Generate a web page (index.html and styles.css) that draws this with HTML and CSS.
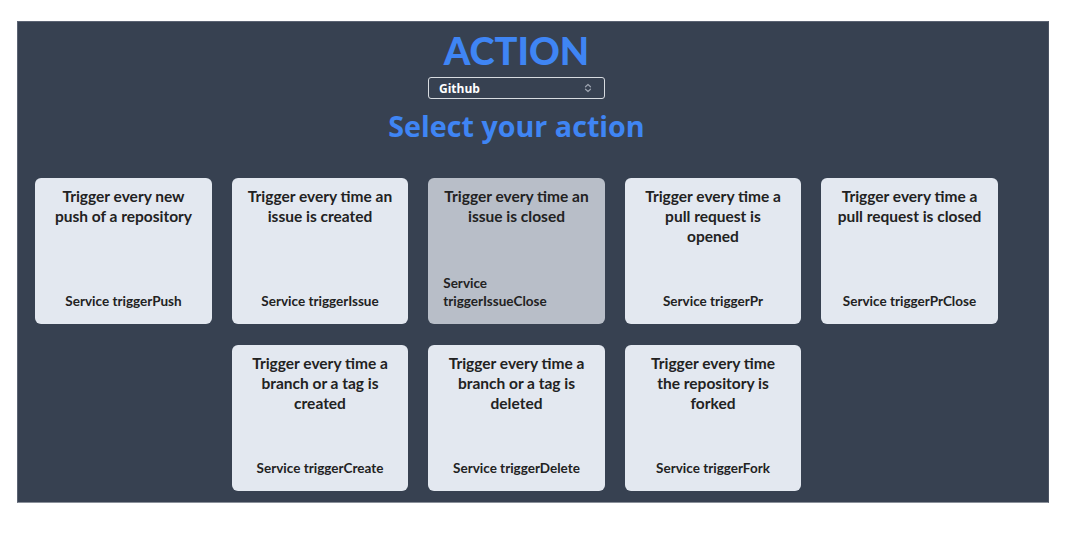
FILE: index.html
```html
<!DOCTYPE html>
<html lang="en">
<head>
<meta charset="utf-8">
<title>Action</title>
<link rel="stylesheet" href="styles.css">
</head>
<body>
<main class="panel">
  <div class="inner">
    <h1 class="title">ACTION</h1>
    <div class="select">
      <span class="select-value">Github</span>
      <svg class="chev" width="8" height="10" viewBox="0 0 8 10" fill="none" stroke="#9ca3af" stroke-width="1.2" stroke-linecap="round" stroke-linejoin="round"><path d="M1.5 3.8 4 1.5 6.5 3.8"/><path d="M1.5 6.2 4 8.5 6.5 6.2"/></svg>
    </div>
    <h2 class="subtitle">Select your action</h2>
    <div class="cards">
      <div class="card"><p class="card-title">Trigger every new push of a repository</p><p class="card-service">Service triggerPush</p></div>
      <div class="card"><p class="card-title">Trigger every time an issue is created</p><p class="card-service">Service triggerIssue</p></div>
      <div class="card card-active"><p class="card-title">Trigger every time an issue is closed</p><p class="card-service">Service triggerIssueClose</p></div>
      <div class="card"><p class="card-title">Trigger every time a pull request is opened</p><p class="card-service">Service triggerPr</p></div>
      <div class="card"><p class="card-title">Trigger every time a pull request is closed</p><p class="card-service">Service triggerPrClose</p></div>
      <div class="card"><p class="card-title">Trigger every time a branch or a tag is created</p><p class="card-service">Service triggerCreate</p></div>
      <div class="card"><p class="card-title">Trigger every time a branch or a tag is deleted</p><p class="card-service">Service triggerDelete</p></div>
      <div class="card"><p class="card-title">Trigger every time the repository is forked</p><p class="card-service">Service triggerFork</p></div>
    </div>
  </div>
</main>
</body>
</html>
```

FILE: styles.css
```css
* { box-sizing: border-box; }
html, body { margin: 0; padding: 0; background: #ffffff; }
body { font-family: Lato, "Noto Sans", sans-serif; }

.panel {
  margin: 21px 0 0 17px;
  width: 1032px;
  height: 482px;
  background: #374151;
  border: 1px solid #5b6373;
  border-right-color: #4b5363;
  border-bottom-color: #8a909a;
}

.inner {
  width: 997px;
  display: flex;
  flex-direction: column;
  align-items: center;
}

.title {
  margin: 5px 0 0;
  font-size: 38px;
  line-height: 46px;
  font-weight: 900;
  color: #3f85f4;
}

.select {
  margin-top: 4px;
  width: 177px;
  height: 22px;
  border: 1px solid #d7dbe0;
  border-radius: 3px;
  display: flex;
  align-items: center;
  justify-content: space-between;
  padding: 0 12px 0 10px;
}
.select-value {
  color: #ffffff;
  font-family: "Open Sans", sans-serif;
  font-weight: 700;
  font-size: 12px;
}
.chev { display: block; }

.subtitle {
  margin: 9px 0 0;
  font-family: "Open Sans", sans-serif;
  font-size: 28.7px;
  line-height: 36px;
  font-weight: 700;
  color: #3f85f4;
}

.cards {
  margin-top: 34px;
  width: 100%;
  display: flex;
  flex-wrap: wrap;
  justify-content: center;
  gap: 21px 20px;
}

.card {
  width: 176.5px;
  height: 146px;
  background: #e3e8f0;
  border-radius: 6px;
  padding: 8px 15px 14px;
  display: flex;
  flex-direction: column;
  align-items: center;
  justify-content: space-between;
  color: #222222;
}
.card-active { background: #b8bec8; }

.card-title {
  margin: 0;
  text-align: center;
  font-size: 15.5px;
  line-height: 20px;
  font-weight: 700;
}
.card-service {
  margin: 0;
  font-size: 13.5px;
  line-height: 18px;
  font-weight: 700;
}
```
